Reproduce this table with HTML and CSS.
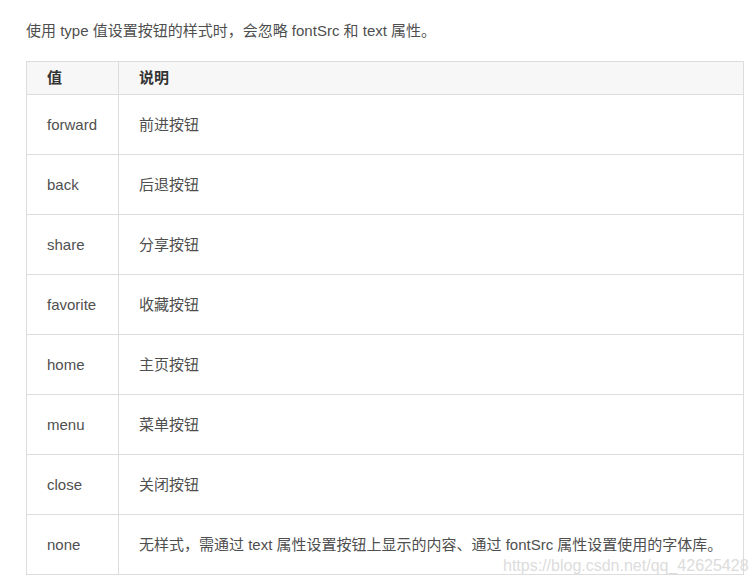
FILE: index.html
```html
<!DOCTYPE html>
<html>
<head>
<meta charset="utf-8">
<link rel="stylesheet" href="styles.css">
</head>
<body>
<div class="page">
  <p class="intro">使用 type 值设置按钮的样式时，会忽略 fontSrc 和 text 属性。</p>
  <table class="tbl">
    <thead>
      <tr><th class="c1">值</th><th>说明</th></tr>
    </thead>
    <tbody>
      <tr><td class="c1">forward</td><td>前进按钮</td></tr>
      <tr><td class="c1">back</td><td>后退按钮</td></tr>
      <tr><td class="c1">share</td><td>分享按钮</td></tr>
      <tr><td class="c1">favorite</td><td>收藏按钮</td></tr>
      <tr><td class="c1">home</td><td>主页按钮</td></tr>
      <tr><td class="c1">menu</td><td>菜单按钮</td></tr>
      <tr><td class="c1">close</td><td>关闭按钮</td></tr>
      <tr><td class="c1">none</td><td>无样式，需通过 text 属性设置按钮上显示的内容、通过 fontSrc 属性设置使用的字体库。</td></tr>
    </tbody>
  </table>
  <div class="watermark">https://blog.csdn.net/qq_42625428</div>
</div>
</body>
</html>
```

FILE: styles.css
```css
html, body {
  margin: 0;
  padding: 0;
  background: #fff;
}
body {
  font-family: "Liberation Sans", "Noto Sans CJK SC", sans-serif;
  font-size: 15px;
  color: #4f4f4f;
}
.page {
  position: relative;
  width: 755px;
  height: 586px;
  padding: 0 12px 0 26px;
  box-sizing: border-box;
}
.intro {
  margin: 0;
  padding-top: 20px;
  line-height: 22px;
  height: 40px;
  box-sizing: border-box;
}
.tbl {
  margin-top: 21px;
  width: 718px;
  border-collapse: collapse;
}
.tbl th, .tbl td {
  border: 1px solid #ddd;
  text-align: left;
  padding: 0 0 0 20px;
  vertical-align: middle;
  line-height: 20px;
}
.tbl th {
  background: #f7f7f7;
  font-weight: bold;
  color: #333;
  height: 32px;
}
.tbl td {
  height: 59px;
}
.tbl .c1 {
  width: 71px;
}
.watermark {
  position: absolute;
  left: 503px;
  top: 557px;
  font-size: 16px;
  color: #dcdcdc;
  white-space: nowrap;
  letter-spacing: 0;
}
```
